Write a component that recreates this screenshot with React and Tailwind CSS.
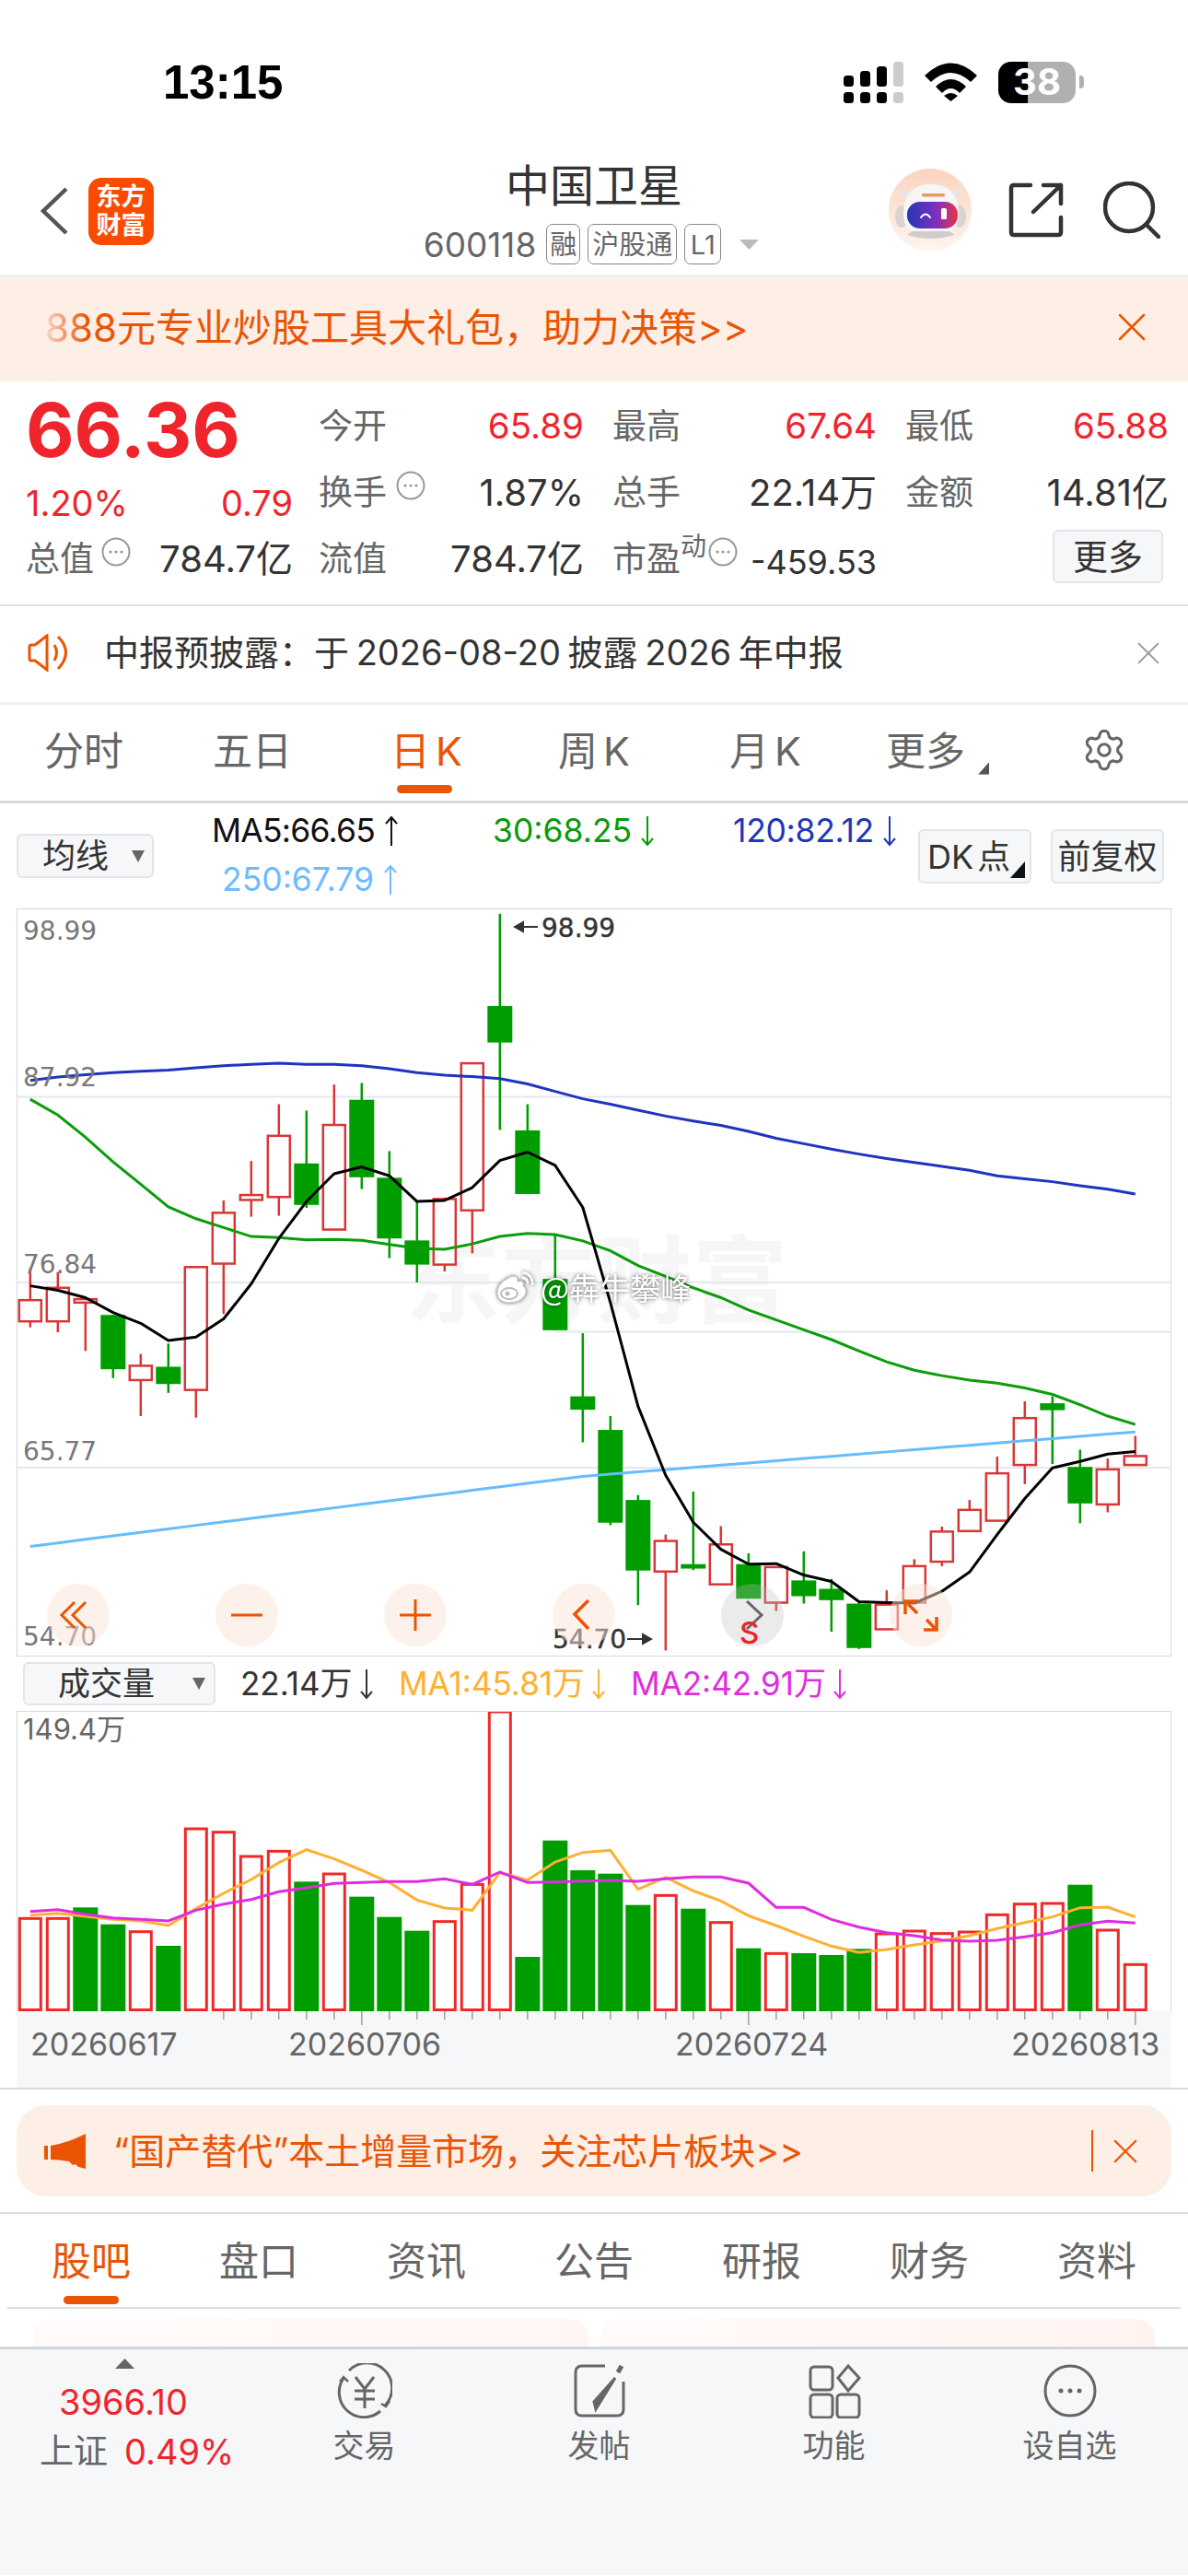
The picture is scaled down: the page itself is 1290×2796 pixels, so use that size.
import { Settings } from "lucide-react";

const RED = "#d93636";
const GREEN = "#009d00";
const cx = (i) => 32.8 + 30 * i;
const py = (z) => 980 + z / 1.867;
const vy = (z) => 1800 + z / 3;

// [up, high, bodyTop, bodyBottom, low] in crop units
const candles = [
  [1, 740, 805, 848, 860], [1, 748, 780, 848, 870], [1, 803, 803, 810, 908], [0, 835, 835, 945, 963],
  [1, 914, 938, 967, 1040], [0, 893, 940, 975, 993], [1, 738, 738, 987, 1043], [1, 603, 628, 731, 833],
  [1, 523, 592, 602, 636], [1, 408, 472, 596, 634], [0, 421, 528, 612, 618], [1, 368, 450, 662, 662],
  [0, 365, 399, 556, 580], [0, 503, 557, 680, 720], [0, 605, 684, 733, 769], [1, 597, 600, 733, 747],
  [1, 325, 325, 623, 710], [0, 22, 209, 283, 460], [0, 408, 461, 590, 590], [0, 672, 762, 866, 866],
  [0, 872, 1000, 1027, 1093], [0, 1040, 1068, 1256, 1261], [0, 1200, 1210, 1353, 1423], [1, 1280, 1293, 1355, 1515],
  [0, 1193, 1340, 1349, 1352], [1, 1263, 1300, 1381, 1381], [0, 1318, 1340, 1410, 1410], [1, 1345, 1346, 1418, 1435],
  [0, 1314, 1373, 1405, 1420], [0, 1370, 1390, 1413, 1477], [0, 1415, 1420, 1510, 1512], [1, 1393, 1422, 1472, 1472],
  [1, 1330, 1344, 1418, 1418], [1, 1264, 1274, 1335, 1344], [1, 1210, 1230, 1273, 1273], [1, 1122, 1156, 1252, 1252],
  [1, 1010, 1044, 1139, 1178], [0, 1000, 1014, 1028, 1137], [0, 1108, 1143, 1217, 1257], [1, 1126, 1148, 1219, 1235],
  [1, 1080, 1121, 1139, 1139],
];

const ma5 = [776, 785, 800, 830, 852, 887, 880, 843, 772, 680, 605, 549, 535, 553, 605, 603, 577, 522, 505, 532, 617, 810, 1020, 1160, 1255, 1310, 1340, 1339, 1362, 1375, 1416, 1418, 1419, 1395, 1356, 1280, 1207, 1145, 1132, 1117, 1112];
const ma30 = [398, 430, 475, 525, 570, 616, 640, 658, 676, 678, 683, 682, 684, 692, 700, 702, 691, 676, 670, 672, 685, 705, 735, 757, 780, 800, 825, 845, 865, 885, 908, 930, 947, 958, 967, 973, 983, 996, 1017, 1040, 1057];
const ma120 = [360, 353, 348, 344, 341, 339, 334, 330, 327, 325, 327, 327, 330, 336, 344, 349, 352, 356, 367, 382, 397, 408, 420, 432, 442, 451, 463, 477, 488, 499, 509, 518, 526, 534, 542, 553, 559, 565, 573, 580, 590];
const ma250 = Array.from({ length: 41 }, (_, i) =>
  i <= 20 ? 1304 - 7.1 * i : 1162 - 4.5 * (i - 20)
);

const volumes = [
  [1, 847], [1, 847], [0, 811], [0, 866], [1, 890], [0, 936], [1, 555], [1, 566], [1, 645], [1, 628], [0, 727],
  [1, 702], [0, 776], [0, 842], [0, 887], [1, 857], [1, 736], [1, 174], [0, 972], [0, 593], [0, 690], [0, 701],
  [0, 803], [1, 772], [0, 815], [1, 860], [0, 944], [1, 961], [0, 960], [0, 966], [0, 946], [1, 897], [1, 888],
  [1, 896], [1, 891], [1, 835], [1, 800], [1, 798], [0, 737], [1, 885], [1, 997],
];
const volMa1 = [836, 830, 840, 850, 855, 870, 815, 765, 720, 665, 623, 653, 690, 730, 787, 813, 820, 697, 722, 663, 632, 625, 752, 713, 757, 790, 838, 870, 905, 937, 958, 948, 933, 920, 903, 880, 860, 842, 812, 810, 842];
const volMa2 = [824, 818, 833, 845, 850, 855, 820, 800, 785, 760, 747, 733, 730, 727, 727, 718, 736, 696, 730, 728, 725, 723, 726, 718, 712, 712, 732, 811, 811, 850, 875, 893, 903, 917, 921, 918, 907, 893, 868, 856, 862];

const line = (vals, map) => vals.map((v, i) => `${cx(i)},${map(v)}`).join(" ");

function Signal() {
  return (
    <svg width="65" height="45" viewBox="0 0 65 45">
      <rect x="0" y="15" width="11" height="12" rx="3.5" />
      <rect x="18" y="10" width="11" height="17" rx="3.5" />
      <rect x="36" y="5" width="11" height="22" rx="3.5" />
      <rect x="54" y="0" width="11" height="27" rx="3.5" fill="#cccccc" />
      <rect x="0" y="33" width="11" height="12" rx="3.5" />
      <rect x="18" y="33" width="11" height="12" rx="3.5" />
      <rect x="36" y="33" width="11" height="12" rx="3.5" />
      <rect x="54" y="33" width="11" height="12" rx="3.5" fill="#cccccc" />
    </svg>
  );
}

function Wifi() {
  return (
    <svg width="57" height="42" viewBox="0 0 57 42">
      <path d="M0 14 Q28.5 -13 57 14 L50 21 Q28.5 1 7 21 Z" />
      <path d="M12 26 Q28.5 10 45 26 L38 33 Q28.5 23 19 33 Z" />
      <path d="M21 36 Q28.5 30 36 36 L28.5 42 Z" />
    </svg>
  );
}

function Battery() {
  return (
    <div className="flex items-center gap-[4px]">
      <div className="relative flex h-[45px] w-[84px]">
        <div className="w-[32px] rounded-l-[14px] bg-black" />
        <div className="flex-1 rounded-r-[14px] bg-[#b0b0b0]" />
        <span className="absolute inset-0 flex items-center justify-center text-[40px] leading-none font-bold text-white">38</span>
      </div>
      <div className="h-[14px] w-[5px] rounded-r-[4px] bg-[#b0b0b0]" />
    </div>
  );
}

function Robot() {
  return (
    <svg width="90" height="90" viewBox="0 0 90 90">
      <defs>
        <linearGradient id="halo" x1="0" y1="0" x2="0" y2="1">
          <stop offset="0" stopColor="#fcd3bf" />
          <stop offset="1" stopColor="#fff5ef" />
        </linearGradient>
        <linearGradient id="visor" x1="0" y1="0" x2="1" y2="0">
          <stop offset="0" stopColor="#2438b0" />
          <stop offset="0.55" stopColor="#7a2fc4" />
          <stop offset="1" stopColor="#e5344a" />
        </linearGradient>
      </defs>
      <circle cx="45" cy="45" r="45" fill="url(#halo)" />
      <path d="M10 18 Q11 32 22 35 L28 26 Q17 27 10 18 Z" fill="#e8e6e4" />
      <path d="M80 18 Q79 32 68 35 L62 26 Q73 27 80 18 Z" fill="#e8e6e4" />
      <ellipse cx="14" cy="52" rx="7" ry="12" fill="#d7d4d2" />
      <ellipse cx="77" cy="52" rx="7" ry="12" fill="#d7d4d2" />
      <path d="M16 50 Q16 17 46 17 Q76 17 76 50 Q76 73 46 74 Q16 73 16 50 Z" fill="#f7f6f5" />
      <path d="M20 72 Q45 80 72 72 L66 68 L26 68 Z" fill="#cfcccb" />
      <rect x="36" y="27" width="25" height="3.5" rx="1.5" fill="#e99a5e" />
      <rect x="20" y="36" width="55" height="29" rx="14" fill="url(#visor)" />
      <path d="M35 53 Q40 46 45 53" fill="none" stroke="#ffffff" strokeWidth="2" strokeLinecap="round" />
      <rect x="57" y="43" width="6" height="12" rx="1.5" fill="#ffffff" />
    </svg>
  );
}

function Close({ size, color, width = 2.5 }) {
  return (
    <svg width={size} height={size} viewBox="0 0 30 30" fill="none" stroke={color} strokeWidth={width} strokeLinecap="round">
      <path d="M2 2 L28 28 M28 2 L2 28" />
    </svg>
  );
}

function DotCircle({ className }) {
  return (
    <svg width="32" height="32" viewBox="0 0 32 32" className={className}>
      <circle cx="16" cy="16" r="14.5" fill="none" stroke="#999999" strokeWidth="2" />
      <circle cx="10" cy="16" r="1.6" fill="#999999" />
      <circle cx="16" cy="16" r="1.6" fill="#999999" />
      <circle cx="22" cy="16" r="1.6" fill="#999999" />
    </svg>
  );
}

function Arrow({ up, color }) {
  return (
    <svg width="16" height="34" viewBox="0 0 16 34" fill="none" stroke={color} strokeWidth="2" className="shrink-0">
      {up ? <path d="M8 33 V2 M2 9 L8 2 L14 9" /> : <path d="M8 1 V32 M2 25 L8 32 L14 25" />}
    </svg>
  );
}

function Stat({ label, value, red, icon }) {
  return (
    <div className="flex h-[72px] items-center justify-between">
      <div className="flex items-center">
        <span className="text-[37px] text-[#666666]">{label}</span>
        {icon && <DotCircle className="ml-[10px] -translate-y-[8px]" />}
      </div>
      <span className={red ? "text-[38.5px] text-[#f0242c]" : "text-[40px] text-[#333333]"}>{value}</span>
    </div>
  );
}

function CornerMark({ className, color = "#555555" }) {
  return (
    <svg width="16" height="18" viewBox="0 0 16 18" className={className}>
      <polygon points="16,0 16,18 0,18" fill={color} />
    </svg>
  );
}

function CaretDown() {
  return (
    <svg width="14" height="13" viewBox="0 0 14 13">
      <polygon points="0,0 14,0 7,13" fill="#666666" />
    </svg>
  );
}

function KChart() {
  return (
    <svg width="1252" height="810" viewBox="19 987 1252 810" className="block">
      <text x="440" y="1428" fontFamily="Noto Sans CJK SC" fontWeight="700" fontSize="103" fill="#f6f6f6" letterSpacing="1">东方财富</text>
      <g stroke="#e4e7ee" strokeWidth="2">
        <line x1="19" x2="1271" y1="1190.5" y2="1190.5" />
        <line x1="19" x2="1271" y1="1392" y2="1392" />
        <line x1="19" x2="1271" y1="1593" y2="1593" />
        <line x1="603" x2="1271" y1="1445.5" y2="1445.5" />
      </g>
      {candles.map(([up, hi, top, bot, lo], i) => {
        const x = cx(i);
        const color = up ? RED : GREEN;
        return (
          <g key={i}>
            <line x1={x} x2={x} y1={py(hi)} y2={py(lo)} stroke={color} strokeWidth="2.5" />
            {up ? (
              <rect x={x - 12} y={py(top)} width="24" height={Math.max(py(bot) - py(top), 3)} fill="#ffffff" stroke={color} strokeWidth="2.5" />
            ) : (
              <rect x={x - 13.5} y={py(top)} width="27" height={py(bot) - py(top)} fill={color} />
            )}
          </g>
        );
      })}
      <polyline points={line(ma120, py)} fill="none" stroke="#2033c0" strokeWidth="3" />
      <polyline points={line(ma30, py)} fill="none" stroke="#0b9d0b" strokeWidth="3" />
      <polyline points={line(ma250, py)} fill="none" stroke="#66bdfd" strokeWidth="3" />
      <polyline points={line(ma5, py)} fill="none" stroke="#000000" strokeWidth="3" strokeLinejoin="round" />
      <g fontFamily="DejaVu Sans" fontSize="28" fill="#777777">
        <text x="25" y="1020">98.99</text>
        <text x="25" y="1179">87.92</text>
        <text x="25" y="1382">76.84</text>
        <text x="25" y="1585">65.77</text>
        <text x="25" y="1786">54.70</text>
      </g>
      <g fontFamily="DejaVu Sans" fontSize="28" fill="#333333" stroke="#333333" strokeWidth="0.4">
        <text x="588" y="1017">98.99</text>
        <text x="600" y="1789">54.70</text>
      </g>
      <path d="M566 1006 H584 M559 1006 L568 1001 V1011 Z" stroke="#333333" strokeWidth="2" fill="#333333" />
      <path d="M681 1779 H700 M707 1779 L698 1774 V1784 Z" stroke="#333333" strokeWidth="2" fill="#333333" />
    </svg>
  );
}

function RoundButton({ gray, children }) {
  return (
    <div className={`h-[68px] w-[68px] shrink-0 rounded-full ${gray ? "bg-[#bdbdbd]/30" : "bg-[#fbe3d8]/50"}`}>
      <svg width="68" height="68" viewBox="0 0 68 68" fill="none" stroke="#ea5504" strokeWidth="3">
        {children}
      </svg>
    </div>
  );
}

function VolChart() {
  return (
    <svg width="1252" height="325" viewBox="19 1858 1252 325" className="block">
      {volumes.map(([up, z], i) => {
        const x = cx(i);
        return up ? (
          <rect key={i} x={x - 11.5} y={vy(z)} width="23" height={2183 - vy(z) - 1.5} fill="#ffffff" stroke="#f02828" strokeWidth="3" />
        ) : (
          <rect key={i} x={x - 13.5} y={vy(z)} width="27" height={2183 - vy(z)} fill={GREEN} />
        );
      })}
      <polyline points={line(volMa1, vy)} fill="none" stroke="#ffb030" strokeWidth="3" />
      <polyline points={line(volMa2, vy)} fill="none" stroke="#e02ce0" strokeWidth="3" />
    </svg>
  );
}

function Ticks() {
  const longOnes = [12, 26, 40];
  return (
    <svg width="1252" height="17" viewBox="19 2183 1252 17" className="block">
      {Array.from({ length: 34 }, (_, k) => k + 7).map((i) => (
        <line key={i} x1={cx(i)} x2={cx(i)} y1="2183" y2={longOnes.includes(i) ? 2198 : 2192} stroke="#a0a0a0" strokeWidth="1.5" />
      ))}
    </svg>
  );
}

function BottomIcon({ children }) {
  return (
    <svg width="60" height="60" viewBox="0 0 60 60" fill="none" stroke="#666666" strokeWidth="3">
      {children}
    </svg>
  );
}

const infoTabs = ["股吧", "盘口", "资讯", "公告", "研报", "财务", "资料"];

export default function App() {
  return (
    <div className="h-[2796px] w-[1290px] overflow-hidden bg-white [font-family:Inter,'Noto_Sans_CJK_SC',sans-serif]">
      {/* status bar */}
      <div className="flex h-[178px] items-center justify-between pr-[113px] pl-[177px]">
        <span className="text-[51px] leading-none font-bold text-black [font-family:'Liberation_Sans',sans-serif]">13:15</span>
        <div className="flex items-center gap-[23px]">
          <Signal />
          <Wifi />
          <Battery />
        </div>
      </div>

      {/* nav */}
      <div className="grid h-[123px] grid-cols-[1fr_auto_1fr] border-b-[3px] border-[#f0f0f2]">
        <div className="flex items-center gap-[22px] pb-[18px] pl-[43px]">
          <svg width="31" height="52" viewBox="0 0 31 52" fill="none" stroke="#555555" strokeWidth="4.5">
            <path d="M29 2 L4 26 L29 50" />
          </svg>
          <div className="flex h-[73px] w-[71px] flex-col items-center justify-center rounded-[14px] bg-[#fa4b00] text-[27px] leading-[31px] font-bold text-white">
            <span>东方</span>
            <span>财富</span>
          </div>
        </div>
        <div className="flex flex-col items-center">
          <div className="-mt-[3px] text-[48px] leading-[54px] text-[#333333]">中国卫星</div>
          <div className="mt-[14px] flex -translate-x-[3px] items-center">
            <span className="text-[37px] leading-none text-[#666666]">600118</span>
            <div className="ml-[11px] flex gap-[8px] text-[29px] leading-none text-[#666666]">
              <span className="flex h-[44px] w-[37px] items-center justify-center rounded-[7px] border-[1.5px] border-[#888888]">融</span>
              <span className="flex h-[44px] w-[97px] items-center justify-center rounded-[7px] border-[1.5px] border-[#888888]">沪股通</span>
              <span className="flex h-[44px] w-[40px] items-center justify-center rounded-[7px] border-[1.5px] border-[#888888]">L1</span>
            </div>
            <svg width="21" height="11" viewBox="0 0 21 11" className="ml-[20px]">
              <polygon points="0,0 21,0 10.5,11" fill="#bbbbbb" />
            </svg>
          </div>
        </div>
        <div className="flex items-center justify-end pr-[30px] pb-[20px]">
          <Robot />
          <svg width="60" height="60" viewBox="0 0 60 60" fill="none" stroke="#333333" strokeWidth="4.5" strokeLinecap="round" strokeLinejoin="round" className="ml-[40px]">
            <path d="M24 3 H6 Q3 3 3 6 V54 Q3 57 6 57 H54 Q57 57 57 54 V38" />
            <path d="M27 32 L57 3 M38 3 H57 V23" />
          </svg>
          <svg width="62" height="62" viewBox="0 0 62 62" fill="none" stroke="#333333" strokeWidth="4.5" strokeLinecap="round" className="ml-[43px]">
            <circle cx="28" cy="28" r="26" />
            <path d="M48 48 L60 60" />
          </svg>
        </div>
      </div>

      {/* promo banner */}
      <div className="relative flex h-[113px] items-center justify-between bg-[#fdeee6] pr-[46px] pb-[5px] pl-[49px]">
        <span className="text-[42px] whitespace-nowrap text-[#ea5504]">888元专业炒股工具大礼包，助力决策&gt;&gt;</span>
        <div className="absolute top-0 left-[40px] h-full w-[55px] bg-linear-to-r from-[#fdeee6] to-transparent" />
        <Close size={30} color="#ea5504" />
      </div>

      {/* quote */}
      <div className="flex h-[244px] border-b-2 border-[#dcdde0] pt-[13px] pl-[28px]">
        <div className="w-[290px]">
          <div className="flex h-[80px] items-center text-[81px] leading-none font-bold text-[#f0242c]">66.36</div>
          <div className="flex h-[78px] items-center justify-between text-[38px] text-[#f0242c]">
            <span>1.20%</span>
            <span>0.79</span>
          </div>
          <div className="flex h-[44px] items-center justify-between">
            <div className="flex items-center">
              <span className="text-[37px] text-[#666666]">总值</span>
              <DotCircle className="ml-[8px] -translate-y-[8px]" />
            </div>
            <span className="text-[40px] text-[#333333]">784.7亿</span>
          </div>
        </div>
        <div className="ml-[28px] grid w-[923px] auto-rows-[72px] grid-cols-[288px_287px_286px] content-start gap-x-[31px]">
          <Stat label="今开" value="65.89" red />
          <Stat label="最高" value="67.64" red />
          <Stat label="最低" value="65.88" red />
          <Stat label="换手" value="1.87%" icon />
          <Stat label="总手" value="22.14万" />
          <Stat label="金额" value="14.81亿" />
          <Stat label="流值" value="784.7亿" />
          <div className="flex h-[72px] items-center justify-between">
            <div className="flex items-center">
              <span className="text-[37px] text-[#666666]">市盈</span>
              <span className="-translate-y-[14px] text-[28px] leading-none text-[#666666]">动</span>
              <DotCircle className="ml-[2px] -translate-y-[8px]" />
            </div>
            <span className="translate-y-[3px] text-[36px] text-[#333333]">-459.53</span>
          </div>
          <div className="flex h-[72px] items-center justify-end pr-[6px] pb-[6px]">
            <button className="h-[58px] w-[120px] rounded-[6px] border-2 border-[#e2e4e8] bg-[#f6f7f9] text-[38px] leading-none text-[#333333]">更多</button>
          </div>
        </div>
      </div>

      {/* notice */}
      <div className="flex h-[107px] items-center justify-between border-b-[3px] border-[#f0f0f2] pr-[31px] pb-[3px] pl-[30px]">
        <div className="flex items-center">
          <svg width="50" height="41" viewBox="0 0 50 41" fill="none" stroke="#ea5504" strokeWidth="3">
            <path d="M2 14 Q2 12 4 12 H8 L21 2 V39 L8 29 H4 Q2 29 2 27 Z" />
            <path d="M29 12 Q34 20 29 29" />
            <path d="M33 3 Q50 20 33 38" />
          </svg>
          <span className="ml-[33px] text-[38px] text-[#333333] [word-spacing:-3px]">中报预披露：于 2026-08-20 披露 2026 年中报</span>
        </div>
        <Close size={24} color="#999999" />
      </div>

      {/* period tabs */}
      <div className="grid h-[107px] grid-cols-[182px_184px_194px_170px_202px_146px_1fr] border-b-[3px] border-[#d8dbe0] text-[43px] leading-none text-[#666666] [word-spacing:-6px]">
        <div className="flex h-[104px] items-center justify-center pb-[4px]">分时</div>
        <div className="flex h-[104px] items-center justify-center pb-[4px]">五日</div>
        <div className="relative flex h-[104px] items-center justify-center pb-[4px] text-[#ea5504]">
          日 K
          <div className="absolute bottom-[8px] left-[65px] h-[9px] w-[60px] rounded-full bg-[#ea5504]" />
        </div>
        <div className="flex h-[104px] items-center justify-center pb-[4px]">周 K</div>
        <div className="flex h-[104px] items-center justify-center pb-[4px]">月 K</div>
        <div className="relative flex h-[104px] items-center justify-center pb-[4px]">
          更多
          <CornerMark className="absolute top-[60px] right-[2px] scale-75" />
        </div>
        <div className="flex h-[104px] items-center justify-end pr-[66px] pb-[6px]">
          <Settings size={50} strokeWidth={1.5} color="#666666" />
        </div>
      </div>

      {/* MA legend */}
      <div className="flex h-[114px] items-start pl-[18px]">
        <div className="mt-[33px] flex h-[48px] w-[149px] items-center rounded-[6px] border-2 border-[#e2e4e8] bg-[#f6f7f9] pr-[8px] pl-[26px] text-[36px] leading-none text-[#333333]">
          <span>均线</span>
          <span className="ml-auto"><CaretDown /></span>
        </div>
        <div className="ml-[63px] w-[767px] text-[35.5px] leading-none">
          <div className="grid h-[56px] grid-cols-[305px_261px_1fr] items-center pt-[3px]">
            <div className="flex items-center gap-[10px] tracking-[-0.8px] text-[#111111]">MA5:66.65<Arrow up color="#111111" /></div>
            <div className="flex items-center gap-[9px] text-[#0a9a0a]">30:68.25<Arrow color="#0a9a0a" /></div>
            <div className="flex items-center gap-[9px] tracking-[-0.3px] text-[#2136b8]">120:82.12<Arrow color="#2136b8" /></div>
          </div>
          <div className="flex h-[54px] items-center gap-[10px] pl-[11px] text-[#6cbcff]">250:67.79<Arrow up color="#6cbcff" /></div>
        </div>
        <div className="relative mt-[28px] flex h-[59px] w-[123px] items-center rounded-[6px] border-2 border-[#e2e4e8] bg-[#f6f7f9] pl-[8px] text-[36px] leading-none text-[#333333] [word-spacing:-6px]">
          DK 点
          <CornerMark className="absolute right-[5px] bottom-[4px]" color="#111111" />
        </div>
        <div className="mt-[28px] ml-[21px] flex h-[59px] w-[123px] items-center justify-center rounded-[6px] border-2 border-[#e2e4e8] bg-[#f6f7f9] text-[36px] leading-none text-[#333333]">前复权</div>
      </div>

      {/* candles */}
      <div className="relative ml-[18px] h-[812px] w-[1254px] border border-[#d5d8de]">
        <KChart />
        <div className="absolute top-[732px] left-[32px] flex gap-[115px]">
          <RoundButton>
            <path d="M30 20 L16 34 L30 48 M42 20 L28 34 L42 48" />
          </RoundButton>
          <RoundButton>
            <path d="M17 34 H51" />
          </RoundButton>
          <RoundButton>
            <path d="M17 34 H51 M34 17 V51" />
          </RoundButton>
          <RoundButton>
            <path d="M39 18 L24 33 L39 49" strokeWidth="3.5" />
          </RoundButton>
          <div className="relative">
            <RoundButton gray>
              <path d="M28 19 L44 34 L28 49" stroke="#666666" />
            </RoundButton>
            <span className="absolute top-[37px] left-[20px] text-[33px] leading-none font-medium text-[#e8252c]">S</span>
          </div>
          <RoundButton>
            <path d="M17 33 V19 H31 M20 22 L30 32 M51 36 V50 H37 M40 39 L50 49" strokeWidth="3.5" />
          </RoundButton>
        </div>
        <div className="absolute top-[392px] left-[518px] flex items-center drop-shadow-[0_0_2px_rgba(0,0,0,0.6)]">
          <svg width="44" height="36" viewBox="0 0 44 36">
            <path d="M3 24 Q3 14 17 7 Q26 4 25 12 Q33 10 31 17 Q36 20 33 27 Q28 35 15 35 Q3 34 3 24 Z" fill="#ffffff" stroke="#c4c4c4" strokeWidth="1" />
            <ellipse cx="16" cy="25" rx="9" ry="6" fill="none" stroke="#bbbbbb" strokeWidth="2" />
            <circle cx="14" cy="25" r="2.5" fill="#bbbbbb" />
            <path d="M30 2 Q42 4 41 16 M30 8 Q36 8 36 14" fill="none" stroke="#ffffff" strokeWidth="2.5" />
          </svg>
          <span className="ml-[6px] text-[33px] leading-none text-white [font-family:'Noto_Sans_CJK_SC',sans-serif]">@犇牛攀峰</span>
        </div>
      </div>

      {/* volume legend */}
      <div className="flex h-[59px] items-start pt-[6px] pl-[25px]">
        <div className="flex h-[47px] w-[209px] items-center rounded-[6px] border-2 border-[#e2e4e8] bg-[#f6f7f9] pr-[9px] pl-[36px] text-[35px] leading-none text-[#333333]">
          <span>成交量</span>
          <span className="ml-auto"><CaretDown /></span>
        </div>
        <div className="ml-[27px] grid h-[47px] grid-cols-[172px_252px_1fr] items-center text-[35px] leading-none">
          <div className="flex items-center gap-[7px] text-[#333333]">22.14万<Arrow color="#333333" /></div>
          <div className="flex items-center gap-[7px] text-[#ffb030]">MA1:45.81万<Arrow color="#ffb030" /></div>
          <div className="flex items-center gap-[7px] text-[#e02ce0]">MA2:42.91万<Arrow color="#e02ce0" /></div>
        </div>
      </div>

      {/* volume */}
      <div className="relative ml-[18px] h-[326px] w-[1254px] border-x border-t border-[#d5d8de]">
        <VolChart />
        <span className="absolute top-[1px] left-[6px] text-[31px] leading-[36px] text-[#666666]">149.4万</span>
      </div>

      {/* dates */}
      <div className="h-[85px] border-b-2 border-[#d8dbe0]">
        <div className="ml-[18px] h-full w-[1254px] bg-[#f6f7f9]">
          <div className="pl-px">
            <Ticks />
          </div>
          <div className="grid grid-cols-[280px_420px_365px_1fr] pl-[15px] text-[34px] leading-[38px] text-[#666666]">
            <span>20260617</span>
            <span>20260706</span>
            <span>20260724</span>
            <span>20260813</span>
          </div>
        </div>
      </div>

      {/* ad pill */}
      <div className="h-[135px] border-b-2 border-[#dcdde0] px-[18px] pt-[17px]">
        <div className="flex h-[99px] items-center rounded-[32px] bg-[#fdeee6] pr-[37px] pl-[30px]">
          <svg width="45" height="38" viewBox="0 0 45 38" fill="#ea5504">
            <rect x="0" y="13" width="4" height="15" />
            <path d="M7 13 Q25 10 45 0 V38 L37 36 L34 33 L31 34 L27 30 Q15 28 7 28 Z" />
          </svg>
          <span className="ml-[30px] text-[39px] leading-none whitespace-nowrap text-[#ea5504]">“国产替代”本土增量市场，关注芯片板块&gt;&gt;</span>
          <div className="ml-auto h-[45px] w-[2px] bg-[#ea5504]" />
          <div className="ml-[22px]">
            <Close size={26} color="#ea5504" />
          </div>
        </div>
      </div>

      {/* info tabs */}
      <div className="mx-[8px] grid h-[103px] grid-cols-7 border-b-2 border-[#dcdde0] text-[43px] leading-none text-[#666666]">
        {infoTabs.map((t, i) => (
          <div key={t} className={`relative flex items-center justify-center pt-[2px] ${i === 0 ? "text-[#ea5504]" : ""}`}>
            {t}
            {i === 0 && <div className="absolute bottom-[3px] left-[61px] h-[9px] w-[60px] rounded-full bg-[#ea5504]" />}
          </div>
        ))}
      </div>

      {/* cards peeking out */}
      <div className="flex h-[41px] gap-[13px] overflow-hidden pt-[11px] pl-[36px]">
        <div className="h-[60px] w-[603px] rounded-t-[20px] bg-linear-to-r from-[#fffafa] to-[#fff6f4]" />
        <div className="h-[60px] w-[602px] rounded-t-[20px] bg-linear-to-r from-[#fffafa] to-[#fff3f0]" />
      </div>

      {/* bottom bar */}
      <div className="grid h-[248px] grid-cols-[268px_255px_255px_255px_1fr] border-t-[3px] border-[#d0d5dc] bg-[#f6f7f9] text-[34px] text-[#666666]">
        <div className="flex flex-col items-start pt-[10px] pl-[43px]">
          <svg width="21" height="11" viewBox="0 0 21 11" className="ml-[82px]">
            <polygon points="10.5,0 21,11 0,11" fill="#666666" />
          </svg>
          <span className="mt-[13px] ml-[21px] text-[38px] leading-[46px] text-[#f0242c]">3966.10</span>
          <div className="mt-[3px] flex items-center leading-[56px]">
            <span className="text-[37px]">上证</span>
            <span className="ml-[18px] text-[38px] text-[#f0242c]">0.49%</span>
          </div>
        </div>
        <div className="flex flex-col items-center pt-[15px]">
          <BottomIcon>
            <path d="M13 8 A27 27 0 0 1 52 46" />
            <path d="M47 52 A27 27 0 0 1 8 15" />
            <path d="M3 20 L7 15 L12 20" strokeWidth="2.5" />
            <path d="M48 44 L53 47 L57 41" strokeWidth="2.5" />
            <path d="M20 15 L30 28 L40 15 M30 28 V49 M19 30 H41 M19 39 H41" />
          </BottomIcon>
          <span className="mt-[5px] leading-[50px]">交易</span>
        </div>
        <div className="flex flex-col items-center pt-[15px]">
          <BottomIcon>
            <path d="M36 3 H11 Q4 3 4 10 V50 Q4 57 11 57 H49 Q56 57 56 50 V20" />
            <path d="M47 16 L26 50 L24 42 Z" fill="#666666" strokeWidth="3" />
            <path d="M54 3 L50 10" strokeWidth="5" />
          </BottomIcon>
          <span className="mt-[5px] leading-[50px]">发帖</span>
        </div>
        <div className="flex flex-col items-center pt-[15px]">
          <BottomIcon>
            <rect x="4" y="4" width="24" height="25" rx="4" />
            <path d="M45 3 L57 16 L45 30 L34 16 Z" />
            <rect x="4" y="34" width="24" height="25" rx="4" />
            <rect x="33" y="34" width="24" height="25" rx="4" />
          </BottomIcon>
          <span className="mt-[5px] leading-[50px]">功能</span>
        </div>
        <div className="flex flex-col items-center pt-[15px]">
          <BottomIcon>
            <circle cx="30" cy="30" r="27" />
            <circle cx="20" cy="30" r="2.5" fill="#666666" stroke="none" />
            <circle cx="30" cy="30" r="2.5" fill="#666666" stroke="none" />
            <circle cx="40" cy="30" r="2.5" fill="#666666" stroke="none" />
          </BottomIcon>
          <span className="mt-[5px] leading-[50px]">设自选</span>
        </div>
      </div>
    </div>
  );
}
